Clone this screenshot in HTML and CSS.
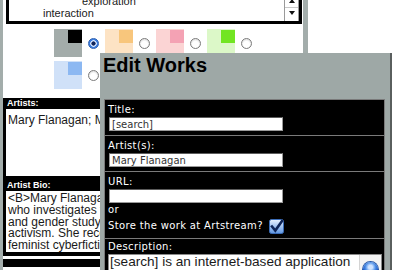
FILE: index.html
```html
<!DOCTYPE html>
<html lang="en">
<head>
  <meta charset="UTF-8" />
  <title>Edit Works</title>
  <link rel="stylesheet" href="styles.css">
</head>
<body>
  <div class="page">
    <div class="column">
      <div class="keywords">
        <div class="kw-text">
          <div class="kw kw-a">exploration</div>
          <div class="kw kw-b">interaction</div>
        </div>
        <div class="kw-scroll">
          <div class="arrow-cell up"><span class="tri-up"></span></div>
          <div class="arrow-cell down"><span class="tri-down"></span></div>
        </div>
      </div>

      <div class="swatches">
        <label class="swatch-item"><span class="swatch gray"></span><span class="radio on"></span></label>
        <label class="swatch-item"><span class="swatch peach"></span><span class="radio"></span></label>
        <label class="swatch-item"><span class="swatch pink"></span><span class="radio"></span></label>
        <label class="swatch-item"><span class="swatch green"></span><span class="radio"></span></label>
        <label class="swatch-item"><span class="swatch blue"></span><span class="radio"></span></label>
        <label class="swatch-item"><span class="swatch gray"></span><span class="radio"></span></label>
      </div>

      <div class="field">
        <div class="field-head">Artists:</div>
        <div class="field-box artists">Mary Flanagan; Mark Marino</div>
      </div>

      <div class="field">
        <div class="field-head">Artist Bio:</div>
        <div class="field-box bio">
          <div>&lt;B&gt;Mary Flanagan&lt;/B&gt; is an artist</div>
          <div>who investigates the</div>
          <div>and gender study with</div>
          <div>activism. She received</div>
          <div>feminist cyberfiction</div>
        </div>
      </div>

      <div class="field next"></div>
    </div>

    <div class="window">
      <h1>Edit Works</h1>
      <div class="form">
        <div class="row">
          <div class="label">Title:</div>
          <input type="text" value="[search]">
        </div>
        <div class="row">
          <div class="label">Artist(s):</div>
          <input type="text" value="Mary Flanagan">
        </div>
        <div class="row">
          <div class="label">URL:</div>
          <input type="text" value="">
          <div class="or">or</div>
          <div class="store">
            <span>Store the work at Artstream?</span>
            <svg class="check" width="15" height="15" viewBox="0 0 15 15">
              <defs>
                <linearGradient id="cb" x1="0" y1="0" x2="0" y2="1">
                  <stop offset="0" stop-color="#eaf3ff"/>
                  <stop offset="1" stop-color="#5d95e2"/>
                </linearGradient>
              </defs>
              <rect x="0.5" y="0.5" width="14" height="14" rx="2" fill="url(#cb)" stroke="#3a6cb8"/>
              <path d="M3 7.5 L6.3 11.5 L13 2" fill="none" stroke="#0e2457" stroke-width="2.6" stroke-linecap="square"/>
            </svg>
          </div>
        </div>
        <div class="row desc-row">
          <div class="label">Description:</div>
          <div class="desc">
            <div class="desc-text">[search] is an internet-based application that lets users search</div>
            <div class="desc-track"><span class="thumb"></span></div>
          </div>
        </div>
      </div>
    </div>
  </div>
</body>
</html>
```

FILE: styles.css
```css
body {
  margin: 0;
  background: #fff;
  font-family: "Liberation Sans", Arial, sans-serif;
  color: #1a1a1a;
  overflow: hidden;
}
.page {
  position: relative;
  width: 400px;
  height: 270px;
  overflow: hidden;
}
.column {
  width: 300px;
  height: 270px;
  border-left: 3px solid #a3adab;
  border-right: 5px solid #a3adab;
  overflow: hidden;
}

/* keyword list box, scrolled past the top */
.keywords {
  display: flex;
  height: 36px;
  margin: -12px 1px 0 3px;
  border: 3px solid #000;
  box-sizing: border-box;
  background: #fff;
  font-size: 11px;
  line-height: 12px;
}
.kw-text {
  flex: 1;
  padding-top: 4px;
  white-space: nowrap;
}
.kw-a {
  padding-left: 73px;
}
.kw-b {
  padding-left: 34px;
}
.kw-scroll {
  width: 13px;
  border-left: 1px solid #9a9a9a;
  border-right: 1px solid #9a9a9a;
  display: flex;
  flex-direction: column;
}
.arrow-cell {
  display: flex;
  justify-content: center;
  box-sizing: border-box;
}
.arrow-cell.up {
  height: 17px;
  align-items: flex-end;
  padding-bottom: 4px;
  border-bottom: 1px solid #c8c8c8;
}
.arrow-cell.down {
  flex: 1;
  align-items: flex-start;
  padding-top: 3px;
}
.tri-up {
  width: 0;
  height: 0;
  border-left: 3px solid transparent;
  border-right: 3px solid transparent;
  border-bottom: 4px solid #111;
}
.tri-down {
  width: 0;
  height: 0;
  border-left: 3px solid transparent;
  border-right: 3px solid transparent;
  border-top: 4px solid #111;
}

/* colour scheme picker */
.swatches {
  display: grid;
  grid-template-columns: repeat(4, 51px);
  row-gap: 4px;
  margin-top: 5px;
  padding-left: 51px;
}
.swatch-item {
  display: flex;
  align-items: center;
  gap: 6px;
}
.swatch {
  width: 28px;
  height: 28px;
  background: linear-gradient(var(--dark), var(--dark)) top 1px right 0 / 14px 13px no-repeat, var(--light);
}
.swatch.gray {
  --light: #a3acaa;
  --dark: #000;
}
.swatch.peach {
  --light: #fde3c4;
  --dark: #f8c67c;
}
.swatch.pink {
  --light: #fbd4d4;
  --dark: #f4a2b4;
}
.swatch.green {
  --light: #dcf8c8;
  --dark: #72e522;
}
.swatch.blue {
  --light: #d0e1f8;
  --dark: #8cb8f2;
}
.radio {
  width: 11px;
  height: 11px;
  border-radius: 50%;
  border: 1px solid #7c7c7c;
  background: radial-gradient(circle at 50% 60%, #fff 0 3px, #e4e4e4 5px);
  box-sizing: border-box;
}
.radio.on {
  border-color: #2d5fb0;
  background: radial-gradient(circle, #10245a 0 1.8px, #d6e6ff 2.4px 3px, #3c7ee0 3.6px);
}

/* artist fields */
.field {
  margin-top: 9px;
  padding: 0 0 4px 3px;
  background: #000;
}
.field + .field {
  margin-top: 0;
}
.field-head {
  height: 11px;
  padding-left: 1px;
  color: #fff;
  font-size: 9px;
  font-weight: bold;
  line-height: 11px;
}
.field-box {
  background: #fff;
  padding: 4px 2px 0;
  box-sizing: border-box;
  font-size: 12px;
  white-space: nowrap;
  overflow: hidden;
}
.field-box.artists {
  height: 67px;
}
.field-box.bio {
  height: 61px;
  padding-top: 2px;
  line-height: 11.75px;
}
.field:nth-of-type(2) {
  padding-bottom: 3px;
}
.field.next {
  margin-top: 3px;
  height: 8px;
  padding: 0;
}

/* Edit Works window */
.window {
  position: absolute;
  left: 100px;
  top: 53px;
  width: 290px;
  height: 230px;
  background: #9ea8a6;
  box-shadow: 2px 0 0 #5a5f5e;
}
.window h1 {
  margin: 0;
  padding: 1px 0 0 3px;
  font-size: 20px;
  line-height: 23px;
  font-weight: bold;
  color: #000;
}
.form {
  margin: 22px 0 0 4px;
  width: 281px;
  border: 1px solid #7a7a7a;
  box-sizing: border-box;
  background: #000;
  color: #fff;
  font-family: "DejaVu Sans", Verdana, sans-serif;
  font-size: 10px;
  line-height: 12px;
}
.row {
  padding: 4px 3px;
}
.row + .row {
  border-top: 1px solid #7a7a7a;
}
.label,
.or,
.store span {
  letter-spacing: 0.35px;
}
.row input {
  display: block;
  margin: 1px 0 0 1px;
  width: 174px;
  height: 14px;
  box-sizing: border-box;
  border: 1px solid #9a9a9a;
  border-top-color: #5c5c5c;
  padding: 0 2px;
  background: #fff;
  color: #333;
  font-family: "DejaVu Sans", Verdana, sans-serif;
  font-size: 10px;
  line-height: 12px;
}
.or {
  margin-top: 1px;
}
.store {
  display: flex;
  align-items: center;
  gap: 6px;
  height: 16px;
  margin-top: 2px;
}
.check {
  display: block;
}
.desc-row {
  padding-top: 2px;
}
.desc {
  display: flex;
  margin-top: 1px;
  width: 274px;
  height: 40px;
  box-sizing: border-box;
  border: 1px solid #8a8a8a;
  background: #fff;
}
.desc-text {
  flex: 1;
  padding: 0 1px;
  font-family: "Liberation Sans", Arial, sans-serif;
  font-size: 13.6px;
  line-height: 14px;
  color: #1a1a1a;
  overflow: hidden;
}
.desc-track {
  width: 21px;
  border-left: 1px solid #d4d4d4;
  background: #f3f3f3;
  display: flex;
  justify-content: center;
  padding-top: 7px;
}
.thumb {
  width: 15px;
  height: 15px;
  border-radius: 50%;
  background: radial-gradient(circle at 50% 35%, #cfe3ff 0 2px, #4d8fe8 5px, #1450c0 8px);
  box-shadow: 0 0 0 1px #2a5aa8;
}
```
